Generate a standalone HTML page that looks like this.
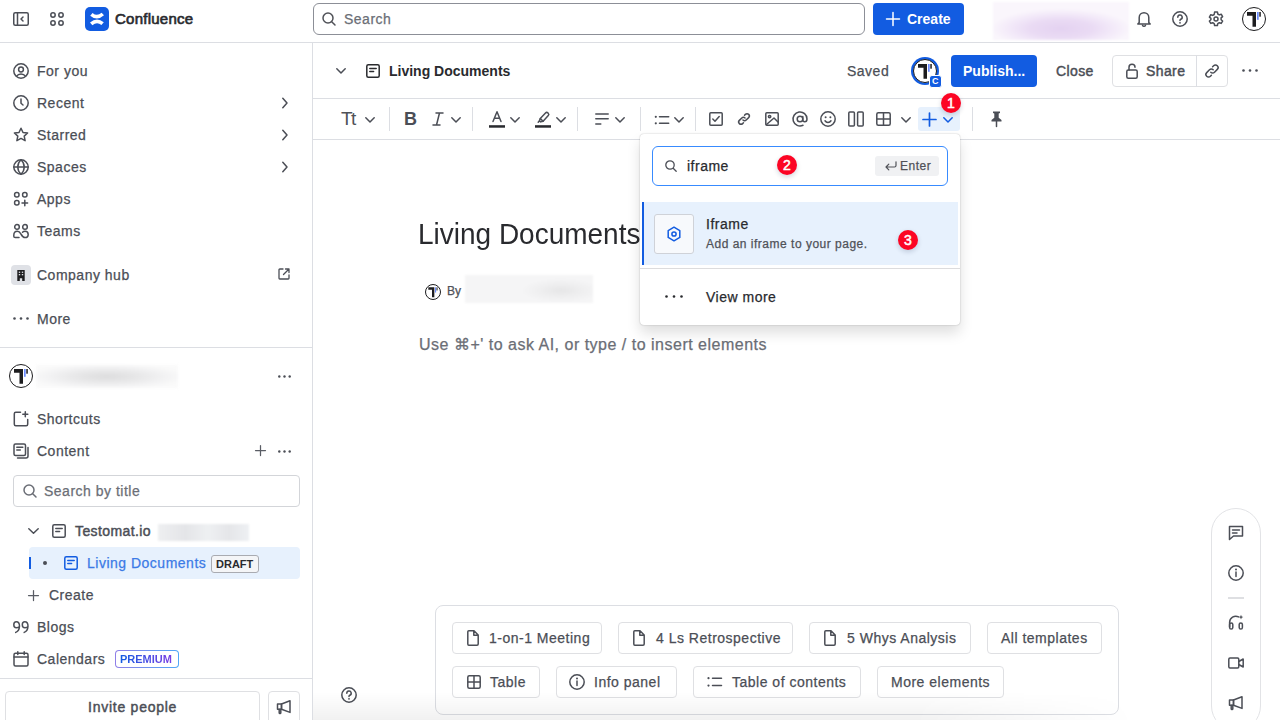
<!DOCTYPE html>
<html><head><meta charset="utf-8">
<style>
*{box-sizing:border-box;margin:0;padding:0}
html,body{width:1280px;height:720px;overflow:hidden;background:#fff}
body{position:relative;font-family:"Liberation Sans",sans-serif;color:#4b4e56;font-size:14px}
.a{position:absolute}
.t{position:absolute;line-height:20px;white-space:nowrap}
svg{position:absolute;overflow:visible}
.st{fill:none;stroke:#4b4e56;stroke-width:1.5;stroke-linecap:round;stroke-linejoin:round}
.t{letter-spacing:.5px;-webkit-text-stroke:.25px currentColor}
.b{font-weight:bold;letter-spacing:0;-webkit-text-stroke:0}
.hl{position:absolute;background:#dcdee3}
.btn{position:absolute;border:1px solid #dfe0e3;border-radius:4px;background:#fff}
.badge{position:absolute;width:20px;height:20px;border-radius:50%;background:#fc0524;color:#fff;font-size:14px;line-height:20px;text-align:center;-webkit-text-stroke:.5px #fff;box-shadow:0 2px 5px rgba(9,30,66,.18)}
</style></head><body>

<!-- ============ TOP NAV ============ -->
<div class="hl" style="left:0;top:42px;width:1280px;height:1px"></div>
<div class="hl" style="left:312px;top:43px;width:1px;height:677px"></div>
<!-- collapse icon -->
<svg style="left:13px;top:12px" width="16" height="14" viewBox="0 0 16 14"><rect class="st" x="0.75" y="0.75" width="14.5" height="12.5" rx="1.5"/><path class="st" d="M4.5 1v12M10 5l-2 2 2 2"/></svg>
<!-- app grid -->
<svg style="left:50px;top:12px" width="14" height="14" viewBox="0 0 14 14"><g class="st"><circle cx="3" cy="3" r="2.2"/><circle cx="11" cy="3" r="2.2"/><circle cx="3" cy="11" r="2.2"/><circle cx="11" cy="11" r="2.2"/></g></svg>
<!-- logo -->
<div class="a" style="left:85px;top:7px;width:24px;height:24px;border-radius:5px;background:#125ce1"></div>
<svg style="left:85px;top:7px" width="24" height="24" viewBox="0 0 24 24"><g fill="none" stroke="#fff" stroke-width="3.6"><path d="M6.4 7.3Q12 12.2 17.8 7"/><path d="M6.2 16.9Q12 11.8 17.6 16.7"/></g></svg>
<div class="t" style="left:115px;top:9px;font-size:15px;color:#292a2e;-webkit-text-stroke:.65px #292a2e;letter-spacing:.25px">Confluence</div>
<!-- search -->
<div class="a" style="left:313px;top:3px;width:552px;height:32px;border:1px solid #8c8f97;border-radius:6px"></div>
<svg style="left:322px;top:12px" width="14" height="14" viewBox="0 0 14 14"><circle class="st" cx="6" cy="6" r="5" style="stroke:#505258"/><path class="st" d="M9.7 9.7l3.3 3.3" style="stroke:#505258"/></svg>
<div class="t" style="left:344px;top:9px;color:#6b6e76">Search</div>
<!-- create -->
<div class="a" style="left:873px;top:3px;width:91px;height:32px;border-radius:4px;background:#125ce1"></div>
<svg style="left:886px;top:12px" width="14" height="14" viewBox="0 0 14 14"><path class="st" d="M7 0.5v13M0.5 7h13" style="stroke:#fff"/></svg>
<div class="t b" style="left:907px;top:9px;color:#fff">Create</div>
<!-- blurred -->
<div class="a" style="left:993px;top:2px;width:136px;height:38px;filter:blur(1px);background:radial-gradient(ellipse 70px 20px at 50% 70%,#e4d2f1 0%,#eadbf4 45%,#f3eaf9 75%,#faf6fc 100%)"></div>
<!-- bell -->
<svg style="left:1137px;top:11px" width="14" height="16" viewBox="0 0 14 16"><path class="st" d="M2.2 11.5V6.5a4.8 4.8 0 0 1 9.6 0v5l1.4 1.5H.8z"/><path class="st" d="M5.5 14.3a1.6 1.6 0 0 0 3 0"/></svg>
<!-- help -->
<svg style="left:1172px;top:11px" width="16" height="16" viewBox="0 0 16 16"><circle class="st" cx="8" cy="8" r="7.2"/><path class="st" d="M5.8 6.2a2.2 2.2 0 1 1 3 2c-.6.3-.8.6-.8 1.3"/><circle cx="8" cy="11.8" r=".9" fill="#4b4e56"/></svg>
<!-- settings -->
<svg style="left:1208px;top:11px" width="16" height="16" viewBox="0 0 16 16"><path class="st" d="M6.6 1h2.8l.4 2 1.5.9 1.9-.7 1.4 2.4-1.5 1.3v1.8l1.5 1.3-1.4 2.4-1.9-.7-1.5.9-.4 2H6.6l-.4-2-1.5-.9-1.9.7-1.4-2.4 1.5-1.3V7.4L1.4 6.1l1.4-2.4 1.9.7 1.5-.9z"/><circle class="st" cx="8" cy="8" r="2"/></svg>
<!-- avatar -->
<div class="a" style="left:1242px;top:7px;width:24px;height:24px;border-radius:50%;border:1.8px solid #1d1d1f;background:#fff"></div>
<svg style="left:1242px;top:7px" width="24" height="24" viewBox="0 0 24 24"><path fill="#1d1d1f" d="M5 5h9v14.8h-3.5V8.7H5z"/><rect x="15" y="5" width="1.7" height="7.8" fill="#6b8cff"/><rect x="17.3" y="5" width="1.5" height="4.7" fill="#1d1d1f"/></svg>

<!-- ============ SIDEBAR ============ -->
<div class="t" style="left:37px;top:61px">For you</div>
<div class="t" style="left:37px;top:93px">Recent</div>
<div class="t" style="left:37px;top:125px">Starred</div>
<div class="t" style="left:37px;top:157px">Spaces</div>
<div class="t" style="left:37px;top:189px">Apps</div>
<div class="t" style="left:37px;top:221px">Teams</div>
<div class="t" style="left:37px;top:265px">Company hub</div>
<div class="t" style="left:37px;top:309px">More</div>
<div class="hl" style="left:0;top:347px;width:312px;height:1px"></div>
<div class="t" style="left:37px;top:409px">Shortcuts</div>
<div class="t" style="left:37px;top:441px">Content</div>
<div class="t" style="left:75px;top:521px;-webkit-text-stroke:.45px #4b4e56;letter-spacing:.4px">Testomat.io</div>
<div class="a" style="left:29px;top:547px;width:271px;height:32px;border-radius:4px;background:#e7f1fd"></div>
<div class="t" style="left:87px;top:553px;color:#3b7ae6">Living Documents</div>
<div class="t" style="left:49px;top:585px">Create</div>
<div class="t" style="left:37px;top:617px">Blogs</div>
<div class="t" style="left:37px;top:649px">Calendars</div>
<div class="hl" style="left:0;top:678px;width:312px;height:1px"></div>


<!-- sidebar icons -->
<svg style="left:13px;top:63px" width="16" height="16" viewBox="0 0 16 16"><g class="st"><circle cx="8" cy="8" r="7.2"/><circle cx="8" cy="6.5" r="2.4"/><path d="M3.6 13.2c1-1.6 2.6-2.3 4.4-2.3s3.4.7 4.4 2.3"/></g></svg>
<svg style="left:13px;top:95px" width="16" height="16" viewBox="0 0 16 16"><g class="st"><circle cx="8" cy="8" r="7.2"/><path d="M8 4v4.3l2 1.7"/></g></svg>
<svg style="left:13px;top:127px" width="16" height="16" viewBox="0 0 16 16"><path class="st" d="M8 1.2l2 4.3 4.6.5-3.4 3.1.9 4.6L8 11.4l-4.1 2.3.9-4.6L1.4 6l4.6-.5z"/></svg>
<svg style="left:13px;top:159px" width="16" height="16" viewBox="0 0 16 16"><g class="st"><circle cx="8" cy="8" r="7.2"/><path d="M.8 8h14.4M8 .8c-2.2 2-3.2 4.4-3.2 7.2s1 5.2 3.2 7.2c2.2-2 3.2-4.4 3.2-7.2S10.2 2.8 8 .8"/></g></svg>
<svg style="left:13px;top:191px" width="16" height="16" viewBox="0 0 16 16"><g class="st"><rect x="1.6" y="1.6" width="4.4" height="4.4" rx="2"/><rect x="9.6" y="1.6" width="4.4" height="4.4" rx="2"/><rect x="1.6" y="9.6" width="4.4" height="4.4" rx="2"/><path d="M11.8 9.2v5.6M9 12h5.6"/></g></svg>
<svg style="left:13px;top:223px" width="16" height="16" viewBox="0 0 16 16"><g class="st"><circle cx="4" cy="3.9" r="2.3"/><circle cx="12" cy="3.9" r="2.3"/><path d="M6 14.6H2.2C1.3 14.6.8 14.1.8 13.2v-.9C.8 10 2.3 8.3 4.3 8.3c1.7 0 2.7 1.1 3.7 2.8s2 3.5 3.9 3.5c2 0 3.3-1.3 3.3-3.2S13.8 8.3 12 8.3c-1.1 0-1.9.4-2.5 1"/></g></svg>
<div class="a" style="left:11px;top:265px;width:20px;height:20px;border-radius:4px;background:#dfe1e6"></div>
<svg style="left:16px;top:270px" width="10" height="11" viewBox="0 0 10 11"><path fill="#1d1d1f" d="M1.3 0h7.4v11H6.2V8.3H3.8V11H1.3z"/><g fill="#dfe1e6"><rect x="2.8" y="1.6" width="1.4" height="1.3"/><rect x="5.8" y="1.6" width="1.4" height="1.3"/><rect x="2.8" y="4" width="1.4" height="1.3"/><rect x="5.8" y="4" width="1.4" height="1.3"/></g></svg>
<svg style="left:278px;top:268px" width="12" height="12" viewBox="0 0 12 12"><path class="st" d="M5 1H1.8C1.3 1 1 1.3 1 1.8v8.4c0 .5.3.8.8.8h8.4c.5 0 .8-.3.8-.8V7M7.5 1H11v3.5M11 1L5.5 6.5" style="stroke-width:1.3"/></svg>
<svg style="left:13px;top:317px" width="16" height="3" viewBox="0 0 16 3"><g fill="#4b4e56"><circle cx="1.5" cy="1.5" r="1.3"/><circle cx="8" cy="1.5" r="1.3"/><circle cx="14.5" cy="1.5" r="1.3"/></g></svg>
<svg style="left:282px;top:97px" width="6" height="12" viewBox="0 0 6 12"><path class="st" d="M.8 1.2L5 6 .8 10.8"/></svg>
<svg style="left:282px;top:129px" width="6" height="12" viewBox="0 0 6 12"><path class="st" d="M.8 1.2L5 6 .8 10.8"/></svg>
<svg style="left:282px;top:161px" width="6" height="12" viewBox="0 0 6 12"><path class="st" d="M.8 1.2L5 6 .8 10.8"/></svg>
<!-- space avatar -->
<div class="a" style="left:9px;top:364px;width:24px;height:24px;border-radius:50%;border:1.8px solid #1d1d1f;background:#fff"></div>
<svg style="left:9px;top:364px" width="24" height="24" viewBox="0 0 24 24"><path fill="#1d1d1f" d="M5 5h9v14.8h-3.5V8.7H5z"/><rect x="15" y="5" width="1.7" height="7.8" fill="#6b8cff"/><rect x="17.3" y="5" width="1.5" height="4.7" fill="#1d1d1f"/></svg>
<div class="a" style="left:36px;top:365px;width:142px;height:23px;filter:blur(1.5px);background:radial-gradient(ellipse 80px 13px at 50% 50%,#dcdcdd 0%,#e9e9ea 45%,#f3f3f4 75%,#fafafa 100%)"></div>
<svg style="left:278px;top:375px" width="13" height="3" viewBox="0 0 13 3"><g fill="#4b4e56"><circle cx="1.3" cy="1.5" r="1.2"/><circle cx="6.5" cy="1.5" r="1.2"/><circle cx="11.7" cy="1.5" r="1.2"/></g></svg>
<svg style="left:13px;top:411px" width="16" height="16" viewBox="0 0 16 16"><g class="st"><path d="M7.5 1.3H2.8c-.8 0-1.5.7-1.5 1.5v10.4c0 .8.7 1.5 1.5 1.5h10.4c.8 0 1.5-.7 1.5-1.5V8.5"/><path d="M12.3.8v5M9.8 3.3h5"/></g></svg>
<svg style="left:13px;top:443px" width="16" height="16" viewBox="0 0 16 16"><g class="st"><rect x="1" y="1" width="11.5" height="11.5" rx="1.5"/><path d="M3.8 4.3h6M3.8 7h3.5M15 4.5v8.5c0 1.1-.9 2-2 2H4.5"/></g></svg>
<svg style="left:255px;top:445px" width="11" height="11" viewBox="0 0 11 11"><path class="st" style="stroke-width:1.25;stroke:#5a5d65" d="M5.5 .5v10M.5 5.5h10"/></svg>
<svg style="left:278px;top:450px" width="13" height="3" viewBox="0 0 13 3"><g fill="#4b4e56"><circle cx="1.3" cy="1.5" r="1.2"/><circle cx="6.5" cy="1.5" r="1.2"/><circle cx="11.7" cy="1.5" r="1.2"/></g></svg>
<!-- search by title -->
<div class="a" style="left:13px;top:475px;width:287px;height:32px;border:1px solid #d3d5d9;border-radius:4px"></div>
<svg style="left:23px;top:484px" width="14" height="14" viewBox="0 0 14 14"><circle class="st" cx="6" cy="6" r="5" style="stroke:#6b6e76"/><path class="st" d="M9.7 9.7l3.3 3.3" style="stroke:#6b6e76"/></svg>
<div class="t" style="left:44px;top:481px;color:#6b6e76">Search by title</div>
<!-- tree -->
<svg style="left:28px;top:528px" width="11" height="6" viewBox="0 0 11 6"><path class="st" d="M.8.8l4.7 4.4L10.2.8"/></svg>
<svg style="left:52px;top:524px" width="14" height="14" viewBox="0 0 14 14"><g class="st"><rect x=".8" y=".8" width="12.4" height="12.4" rx="1.5"/><path d="M3.8 4.5h6.4M3.8 7.5h3.8"/></g></svg>
<div class="a" style="left:158px;top:524px;width:91px;height:17px;filter:blur(.8px);background:linear-gradient(90deg,#eeeff1 0%,#e4e5e8 30%,#eef0f2 55%,#e5e6e9 78%,#eef0f3 100%)"></div>
<div class="a" style="left:29px;top:557px;width:2px;height:12px;background:#125ce1"></div>
<div class="a" style="left:43px;top:561px;width:4px;height:4px;border-radius:50%;background:#4b4e56"></div>
<svg style="left:64px;top:556px" width="14" height="14" viewBox="0 0 14 14"><g class="st" style="stroke:#125ce1"><rect x=".8" y=".8" width="12.4" height="12.4" rx="1.5"/><path d="M3.8 4.5h6.4M3.8 7.5h3.8"/></g></svg>
<div class="a" style="left:211px;top:555px;width:48px;height:18px;border:1px solid #a9abb1;border-radius:3px;background:#f4f5f7"></div>
<div class="t b" style="left:216px;top:554px;font-size:11px;color:#292a2e;line-height:20px">DRAFT</div>
<svg style="left:28px;top:590px" width="11" height="11" viewBox="0 0 11 11"><path class="st" style="stroke-width:1.25;stroke:#5a5d65" d="M5.5 .5v10M.5 5.5h10"/></svg>
<svg style="left:13px;top:621px" width="16" height="12" viewBox="0 0 16 12"><g class="st"><path d="M6.5 5.2c0-2.3-1-4.4-3.2-4.4S.8 2.3.8 3.8s1 3 2.6 3 3-.9 3.1-1.6c-.2 3.3-1.4 5.3-3.8 6.2"/><path d="M15 5.2c0-2.3-1-4.4-3.2-4.4S9.3 2.3 9.3 3.8s1 3 2.6 3 3-.9 3.1-1.6c-.2 3.3-1.4 5.3-3.8 6.2"/></g></svg>
<svg style="left:13px;top:651px" width="16" height="16" viewBox="0 0 16 16"><g class="st"><rect x="1" y="2.2" width="14" height="12.8" rx="1.5"/><path d="M1 6h14M4.8.8v2.8M11.2.8v2.8"/></g></svg>
<div class="a" style="left:115px;top:650px;width:64px;height:18px;border-radius:4px;background:linear-gradient(90deg,#8f7ee7,#4fa7f8);padding:1px"><div style="width:100%;height:100%;background:#fff;border-radius:3px"></div></div>
<div class="t b" style="left:120px;top:649px;font-size:11px;line-height:20px;background:linear-gradient(90deg,#125ce1,#7b3fe4);-webkit-background-clip:text;color:transparent">PREMIUM</div>
<!-- invite -->
<div class="btn" style="left:5px;top:691px;width:255px;height:36px"></div>
<div class="t" style="left:88px;top:697px;color:#4b4e56;-webkit-text-stroke:.45px #4b4e56;letter-spacing:.75px">Invite people</div>
<div class="btn" style="left:268px;top:691px;width:32px;height:36px"></div>
<svg style="left:276px;top:699px" width="16" height="16" viewBox="0 0 16 16"><g class="st"><path d="M5.5 5L14 1.8v11.6L5.5 10.2z"/><path d="M1.5 5h4v5.2h-4z"/><path d="M3.2 10.2v3.6c0 .5.3.8.8.8s.8-.3.8-.8v-3.6"/></g></svg>


<!-- ============ PAGE HEADER ============ -->
<div class="hl" style="left:313px;top:98px;width:967px;height:1px"></div>
<div class="hl" style="left:313px;top:139px;width:967px;height:1px"></div>
<svg style="left:336px;top:68px" width="10" height="6" viewBox="0 0 10 6"><path class="st" d="M.8.8L5 5 9.2.8"/></svg>
<svg style="left:366px;top:64px" width="14" height="14" viewBox="0 0 14 14"><g class="st" style="stroke:#292a2e"><rect x=".8" y=".8" width="12.4" height="12.4" rx="1.5"/><path d="M3.8 4.5h6.4M3.8 7.5h3.8"/></g></svg>
<div class="t b" style="left:389px;top:61px;color:#292a2e">Living Documents</div>
<div class="t" style="left:847px;top:61px">Saved</div>
<!-- collab avatar -->
<div class="a" style="left:911px;top:57px;width:28px;height:28px;border-radius:50%;background:#125ce1"></div>
<div class="a" style="left:913px;top:59px;width:24px;height:24px;border-radius:50%;border:1.8px solid #1d1d1f;background:#fff"></div>
<svg style="left:913px;top:59px" width="24" height="24" viewBox="0 0 24 24"><path fill="#1d1d1f" d="M5 5h9v14.8h-3.5V8.7H5z"/><rect x="15" y="5" width="1.7" height="7.8" fill="#6b8cff"/><rect x="17.3" y="5" width="1.5" height="4.7" fill="#1d1d1f"/></svg>
<div class="a" style="left:929px;top:75px;width:13px;height:13px;border-radius:3px;background:#125ce1;border:1px solid #fff"></div>
<div class="t b" style="left:932px;top:71px;font-size:9px;color:#fff">C</div>
<!-- publish -->
<div class="a" style="left:951px;top:55px;width:86px;height:32px;border-radius:4px;background:#125ce1"></div>
<div class="t b" style="left:963px;top:61px;color:#fff">Publish...</div>
<div class="t" style="left:1056px;top:61px;-webkit-text-stroke:.45px #4b4e56;letter-spacing:.4px">Close</div>
<div class="btn" style="left:1112px;top:55px;width:116px;height:32px"></div>
<div class="hl" style="left:1196px;top:55px;width:1px;height:32px"></div>
<svg style="left:1126px;top:63px" width="12" height="16" viewBox="0 0 12 16"><g class="st"><rect x=".8" y="7" width="10.4" height="8.2" rx="1.5"/><path d="M3 7V4.2a3 3 0 0 1 6 0"/></g></svg>
<div class="t" style="left:1146px;top:61px;-webkit-text-stroke:.45px #4b4e56;letter-spacing:.4px">Share</div>
<svg style="left:1204px;top:63px" width="16" height="16" viewBox="0 0 16 16"><g class="st"><path d="M6.8 9.2a2.6 2.6 0 0 0 3.7 0l2.8-2.8a2.6 2.6 0 0 0-3.7-3.7l-1 1"/><path d="M9.2 6.8a2.6 2.6 0 0 0-3.7 0L2.7 9.6a2.6 2.6 0 0 0 3.7 3.7l1-1"/></g></svg>
<svg style="left:1242px;top:69px" width="16" height="3" viewBox="0 0 16 3"><g fill="#4b4e56"><circle cx="1.5" cy="1.5" r="1.3"/><circle cx="8" cy="1.5" r="1.3"/><circle cx="14.5" cy="1.5" r="1.3"/></g></svg>

<!-- ============ TOOLBAR ============ -->
<div class="t" style="left:341px;top:109px;font-size:19px;letter-spacing:-1.5px;color:#505258;-webkit-text-stroke:0">Tt</div>
<svg style="left:365px;top:117px" width="10" height="6" viewBox="0 0 10 6"><path class="st" d="M.8.8L5 5 9.2.8"/></svg>
<div class="hl" style="left:389px;top:107px;width:1px;height:24px"></div>
<div class="t b" style="left:404px;top:109px;font-size:18px;color:#4b4e56">B</div>
<svg style="left:433px;top:112px" width="10" height="14" viewBox="0 0 10 14"><path class="st" d="M3 1h7M0 13h7M6.5 1L3.5 13"/></svg>
<svg style="left:451px;top:117px" width="10" height="6" viewBox="0 0 10 6"><path class="st" d="M.8.8L5 5 9.2.8"/></svg>
<div class="hl" style="left:472px;top:107px;width:1px;height:24px"></div>
<svg style="left:489px;top:111px" width="16" height="17" viewBox="0 0 16 17"><path class="st" d="M4 10.5L8 .8l4 9.7M5.4 7.2h5.2"/><rect x="0" y="14.2" width="16" height="2.5" fill="#292a2e"/></svg>
<svg style="left:510px;top:117px" width="10" height="6" viewBox="0 0 10 6"><path class="st" d="M.8.8L5 5 9.2.8"/></svg>
<svg style="left:535px;top:110px" width="16" height="18" viewBox="0 0 16 18"><g class="st"><path d="M5.3 8.6l5.2-5.6a1.7 1.7 0 0 1 2.4-.1l.3.3a1.7 1.7 0 0 1 .1 2.4L8.1 11.2z"/><path d="M5.3 8.6l-.9 2.2 1.3 1.1 2.4-.7M4.4 10.8l-1.2 1.4"/></g><rect x="0" y="15.2" width="16" height="2.5" fill="#292a2e"/></svg>
<svg style="left:556px;top:117px" width="10" height="6" viewBox="0 0 10 6"><path class="st" d="M.8.8L5 5 9.2.8"/></svg>
<div class="hl" style="left:577px;top:107px;width:1px;height:24px"></div>
<svg style="left:595px;top:113px" width="14" height="12" viewBox="0 0 14 12"><path class="st" d="M.8 1h12.4M.8 5.8h12.4M.8 11h5"/></svg>
<svg style="left:615px;top:117px" width="10" height="6" viewBox="0 0 10 6"><path class="st" d="M.8.8L5 5 9.2.8"/></svg>
<div class="hl" style="left:640px;top:107px;width:1px;height:24px"></div>
<svg style="left:654px;top:113.5px" width="15" height="12" viewBox="0 0 15 12"><g fill="#4b4e56"><circle cx="1.8" cy="2.8" r="1.1"/><circle cx="1.8" cy="9.3" r="1.1"/></g><path class="st" d="M5.5 2.8h9.2M5.5 9.3h9.2"/></svg>
<svg style="left:674px;top:117px" width="10" height="6" viewBox="0 0 10 6"><path class="st" d="M.8.8L5 5 9.2.8"/></svg>
<div class="hl" style="left:695px;top:107px;width:1px;height:24px"></div>
<svg style="left:709px;top:112px" width="14" height="14" viewBox="0 0 14 14"><g class="st"><rect x=".8" y=".8" width="12.4" height="12.4" rx="1"/><path d="M3.8 7l2.2 2.2 4.2-4.6"/></g></svg>
<svg style="left:737px;top:112px" width="14" height="14" viewBox="0 0 16 16"><g class="st" style="stroke-width:1.7"><path d="M6.8 9.2a2.6 2.6 0 0 0 3.7 0l2.8-2.8a2.6 2.6 0 0 0-3.7-3.7l-1 1"/><path d="M9.2 6.8a2.6 2.6 0 0 0-3.7 0L2.7 9.6a2.6 2.6 0 0 0 3.7 3.7l1-1"/></g></svg>
<svg style="left:765px;top:112px" width="14" height="14" viewBox="0 0 14 14"><g class="st"><rect x=".8" y=".8" width="12.4" height="12.4" rx="1"/><circle cx="4.6" cy="4.6" r="1.2"/><path d="M1.5 12.5L9 6l4 4"/></g></svg>
<svg style="left:792px;top:111px" width="16" height="16" viewBox="0 0 16 16"><g class="st"><circle cx="8" cy="8" r="2.8"/><path d="M10.8 5.5v3.3c0 1.3.9 2 1.9 2s2.3-.9 2.3-2.8A7 7 0 1 0 11 14.3"/></g></svg>
<svg style="left:820px;top:111px" width="16" height="16" viewBox="0 0 16 16"><g class="st"><circle cx="8" cy="8" r="7.2"/><path d="M5 9.8c.7 1 1.8 1.6 3 1.6s2.3-.6 3-1.6"/></g><circle cx="5.6" cy="6.2" r="1" fill="#4b4e56"/><circle cx="10.4" cy="6.2" r="1" fill="#4b4e56"/></svg>
<svg style="left:848px;top:111px" width="16" height="16" viewBox="0 0 16 16"><g class="st"><rect x=".8" y="1" width="5.6" height="14" rx="1"/><rect x="9.6" y="1" width="5.6" height="14" rx="1"/></g></svg>
<svg style="left:876px;top:112px" width="15" height="14" viewBox="0 0 15 14"><g class="st"><rect x=".8" y=".8" width="13.4" height="12.4" rx="1.5"/><path d="M7.5 1v12M1 7h13"/></g></svg>
<svg style="left:901px;top:117px" width="10" height="6" viewBox="0 0 10 6"><path class="st" d="M.8.8L5 5 9.2.8"/></svg>
<div class="a" style="left:918px;top:107px;width:42px;height:24px;border-radius:3px;background:#e7f1fd"></div>
<svg style="left:923px;top:113px" width="13" height="13" viewBox="0 0 13 13"><path class="st" d="M6.5 0v13M0 6.5h13" style="stroke:#125ce1;stroke-width:1.7"/></svg>
<svg style="left:943px;top:117px" width="10" height="6" viewBox="0 0 10 6"><path class="st" d="M.8.8L5 5 9.2.8" style="stroke:#125ce1"/></svg>
<div class="hl" style="left:972px;top:107px;width:1px;height:24px"></div>
<svg style="left:990px;top:111px" width="13" height="16" viewBox="0 0 13 16"><path fill="#4b4e56" d="M3 .5h7v1.5l-1.3.6v4.2l2.8 2.2v1.6H1.5V9l2.8-2.2V2.6L3 2z"/><path class="st" d="M6.5 10.5v5"/></svg>



<!-- ============ CONTENT ============ -->
<div class="t" style="left:418px;top:217.5px;font-size:29px;line-height:32px;color:#292a2e;letter-spacing:0;-webkit-text-stroke:0;transform:scaleX(.965);transform-origin:0 0">Living Documents</div>
<div class="a" style="left:425px;top:284px;width:16px;height:16px;border-radius:50%;border:1.2px solid #1d1d1f;background:#fff"></div>
<svg style="left:425px;top:284px" width="16" height="16" viewBox="0 0 24 24"><path fill="#1d1d1f" d="M5 5h9v14.8h-3.5V8.7H5z"/><rect x="15" y="5" width="1.7" height="7.8" fill="#6b8cff"/><rect x="17.3" y="5" width="1.5" height="4.7" fill="#1d1d1f"/></svg>
<div class="t" style="left:447px;top:281px;font-size:12px;color:#505258;letter-spacing:0">By</div>
<div class="a" style="left:465px;top:275px;width:128px;height:28px;filter:blur(1px);background:radial-gradient(ellipse 40px 12px at 75% 55%,#e6e6e7 0%,#efeff0 55%,#f5f5f6 100%)"></div>
<div class="t" style="left:419px;top:335px;font-size:16px;color:#6b6e76">Use &#8984;+' to ask AI, or type / to insert elements</div>

<!-- bottom gradient -->


<!-- ============ TEMPLATES PANEL ============ -->
<div class="a" style="left:435px;top:605px;width:684px;height:110px;border:1px solid #dcdee3;border-radius:8px;background:#fff"></div>
<div class="btn" style="left:452px;top:622px;width:150px;height:32px"></div>
<div class="btn" style="left:618px;top:622px;width:175px;height:32px"></div>
<div class="btn" style="left:809px;top:622px;width:162px;height:32px"></div>
<div class="btn" style="left:987px;top:622px;width:115px;height:32px"></div>
<div class="btn" style="left:452px;top:666px;width:88px;height:32px"></div>
<div class="btn" style="left:556px;top:666px;width:121px;height:32px"></div>
<div class="btn" style="left:693px;top:666px;width:168px;height:32px"></div>
<div class="btn" style="left:877px;top:666px;width:127px;height:32px"></div>
<svg style="left:467px;top:630px" width="12" height="16" viewBox="0 0 12 16"><path class="st" d="M1.8.8h5.2L11.2 5v9c0 .7-.5 1.2-1.2 1.2H1.8c-.7 0-1-.5-1-1.2V1.8c0-.6.3-1 1-1zM6.8 1v4.3h4.2"/></svg>
<div class="t" style="left:489px;top:628px">1-on-1 Meeting</div>
<svg style="left:633px;top:630px" width="12" height="16" viewBox="0 0 12 16"><path class="st" d="M1.8.8h5.2L11.2 5v9c0 .7-.5 1.2-1.2 1.2H1.8c-.7 0-1-.5-1-1.2V1.8c0-.6.3-1 1-1zM6.8 1v4.3h4.2"/></svg>
<div class="t" style="left:656px;top:628px">4 Ls Retrospective</div>
<svg style="left:824px;top:630px" width="12" height="16" viewBox="0 0 12 16"><path class="st" d="M1.8.8h5.2L11.2 5v9c0 .7-.5 1.2-1.2 1.2H1.8c-.7 0-1-.5-1-1.2V1.8c0-.6.3-1 1-1zM6.8 1v4.3h4.2"/></svg>
<div class="t" style="left:847px;top:628px">5 Whys Analysis</div>
<div class="t" style="left:1001px;top:628px">All templates</div>
<svg style="left:467px;top:675px" width="14" height="14" viewBox="0 0 14 14"><g class="st"><rect x=".8" y=".8" width="12.4" height="12.4" rx="1.5"/><path d="M7 1v12M1 7h12"/></g></svg>
<div class="t" style="left:490px;top:672px">Table</div>
<svg style="left:569px;top:674px" width="16" height="16" viewBox="0 0 16 16"><g class="st"><circle cx="8" cy="8" r="7.2"/><path d="M8 7v4.5"/></g><circle cx="8" cy="4.6" r="1" fill="#4b4e56"/></svg>
<div class="t" style="left:594px;top:672px">Info panel</div>
<svg style="left:707px;top:676px" width="15" height="12" viewBox="0 0 15 12"><g fill="#4b4e56"><circle cx="1.5" cy="2.2" r="1.1"/><circle cx="1.5" cy="9.6" r="1.1"/></g><path class="st" d="M5.5 2.2h9M5.5 9.6h9"/></svg>
<div class="t" style="left:732px;top:672px">Table of contents</div>
<div class="t" style="left:891px;top:672px">More elements</div>
<svg style="left:341px;top:687px" width="16" height="16" viewBox="0 0 16 16"><circle class="st" cx="8" cy="8" r="7.2"/><path class="st" d="M5.8 6.2a2.2 2.2 0 1 1 3 2c-.6.3-.8.6-.8 1.3"/><circle cx="8" cy="11.8" r=".9" fill="#4b4e56"/></svg>

<div class="a" style="left:313px;top:692px;width:967px;height:28px;background:linear-gradient(180deg,rgba(0,0,0,0),rgba(0,0,0,.055));-webkit-mask-image:linear-gradient(90deg,#000 0%,#000 62%,transparent 85%)"></div>
<!-- ============ RIGHT RAIL ============ -->
<div class="a" style="left:1211px;top:508px;width:50px;height:223px;border:1px solid #e2e3e6;border-radius:25px;background:#fff"></div>
<svg style="left:1228px;top:525px" width="16" height="16" viewBox="0 0 16 16"><g class="st"><path d="M1.5 1.5h13v9.5H5.5L1.5 14.5z"/><path d="M4.5 5h7M4.5 8h4.5"/></g></svg>
<svg style="left:1228px;top:565px" width="16" height="16" viewBox="0 0 16 16"><g class="st"><circle cx="8" cy="8" r="7.2"/><path d="M8 7v4.5"/></g><circle cx="8" cy="4.6" r="1" fill="#4b4e56"/></svg>
<div class="a" style="left:1228px;top:597px;width:16px;height:2px;background:#dedfe2"></div>
<svg style="left:1228px;top:614px" width="16" height="16" viewBox="0 0 16 16"><g class="st"><path d="M1.6 13V8.5a6.2 6.2 0 0 1 9-5.6"/><rect x="1.6" y="9" width="3.2" height="6" rx="1.6"/><rect x="11.2" y="9" width="3.2" height="6" rx="1.6"/></g><path fill="#4b4e56" d="M13 .8l.7 1.6 1.6.7-1.6.7-.7 1.6-.7-1.6-1.6-.7 1.6-.7z"/></svg>
<svg style="left:1228px;top:656px" width="16" height="14" viewBox="0 0 16 14"><g class="st"><rect x=".8" y="2" width="10" height="10" rx="1.2"/><path d="M10.8 5.5l4.4-2.5v8l-4.4-2.5"/></g></svg>
<svg style="left:1228px;top:695px" width="16" height="16" viewBox="0 0 16 16"><g class="st"><path d="M5.5 5L14 1.8v11.6L5.5 10.2z"/><path d="M1.5 5h4v5.2h-4z"/><path d="M3.2 10.2v3.6c0 .5.3.8.8.8s.8-.3.8-.8v-3.6"/></g></svg>

<!-- ============ DROPDOWN ============ -->
<div class="a" style="left:640px;top:134px;width:320px;height:191px;border-radius:4px;background:#fff;box-shadow:0 8px 14px rgba(0,0,0,.13),0 0 1.5px rgba(0,0,0,.3)"></div>
<div class="a" style="left:652px;top:146px;width:296px;height:40px;border:1px solid #388bff;border-radius:6px;background:#fff"></div>
<svg style="left:665px;top:160px" width="12" height="12" viewBox="0 0 12 12"><circle class="st" cx="5" cy="5" r="4.2" style="stroke-width:1.3"/><path class="st" d="M8.2 8.2l3 3" style="stroke-width:1.3"/></svg>
<div class="t" style="left:687px;top:156px;color:#292a2e">iframe</div>
<div class="badge" style="left:777px;top:155px">2</div>
<div class="a" style="left:875px;top:156px;width:64px;height:20px;border-radius:3px;background:#f0f1f3"></div>
<svg style="left:885px;top:161px" width="12" height="10" viewBox="0 0 12 10"><path class="st" d="M11 .8v3.7c0 .8-.6 1.5-1.5 1.5H1M3.8 3.2L1 6l2.8 2.8" style="stroke:#505258;stroke-width:1.2"/></svg>
<div class="t" style="left:900px;top:156px;font-size:12px;color:#505258">Enter</div>
<div class="a" style="left:642px;top:202px;width:316px;height:63px;background:#e7f1fd"></div>
<div class="a" style="left:642px;top:202px;width:2px;height:63px;background:#125ce1"></div>
<div class="a" style="left:654px;top:214px;width:40px;height:40px;border:1px solid #cfd2d8;border-radius:3px;background:#f7f9fc"></div>
<svg style="left:666px;top:226px" width="16" height="16" viewBox="0 0 16 16"><g class="st" style="stroke:#125ce1"><path d="M8 1.2l5.8 3.4v6.8L8 14.8l-5.8-3.4V4.6z"/><circle cx="8" cy="8" r="2.1"/></g></svg>
<div class="t" style="left:706px;top:214px;color:#292a2e">Iframe</div>
<div class="t" style="left:706px;top:234px;font-size:12px;color:#505258">Add an iframe to your page.</div>
<div class="badge" style="left:898px;top:230px">3</div>
<div class="hl" style="left:640px;top:268px;width:320px;height:1px;background:#dcdcde"></div>
<svg style="left:665px;top:295px" width="18" height="3" viewBox="0 0 18 3"><g fill="#292a2e"><circle cx="1.5" cy="1.5" r="1.3"/><circle cx="9" cy="1.5" r="1.3"/><circle cx="16.5" cy="1.5" r="1.3"/></g></svg>
<div class="t" style="left:706px;top:287px;color:#292a2e">View more</div>

<div class="badge" style="left:941px;top:93px">1</div>
</body></html>
